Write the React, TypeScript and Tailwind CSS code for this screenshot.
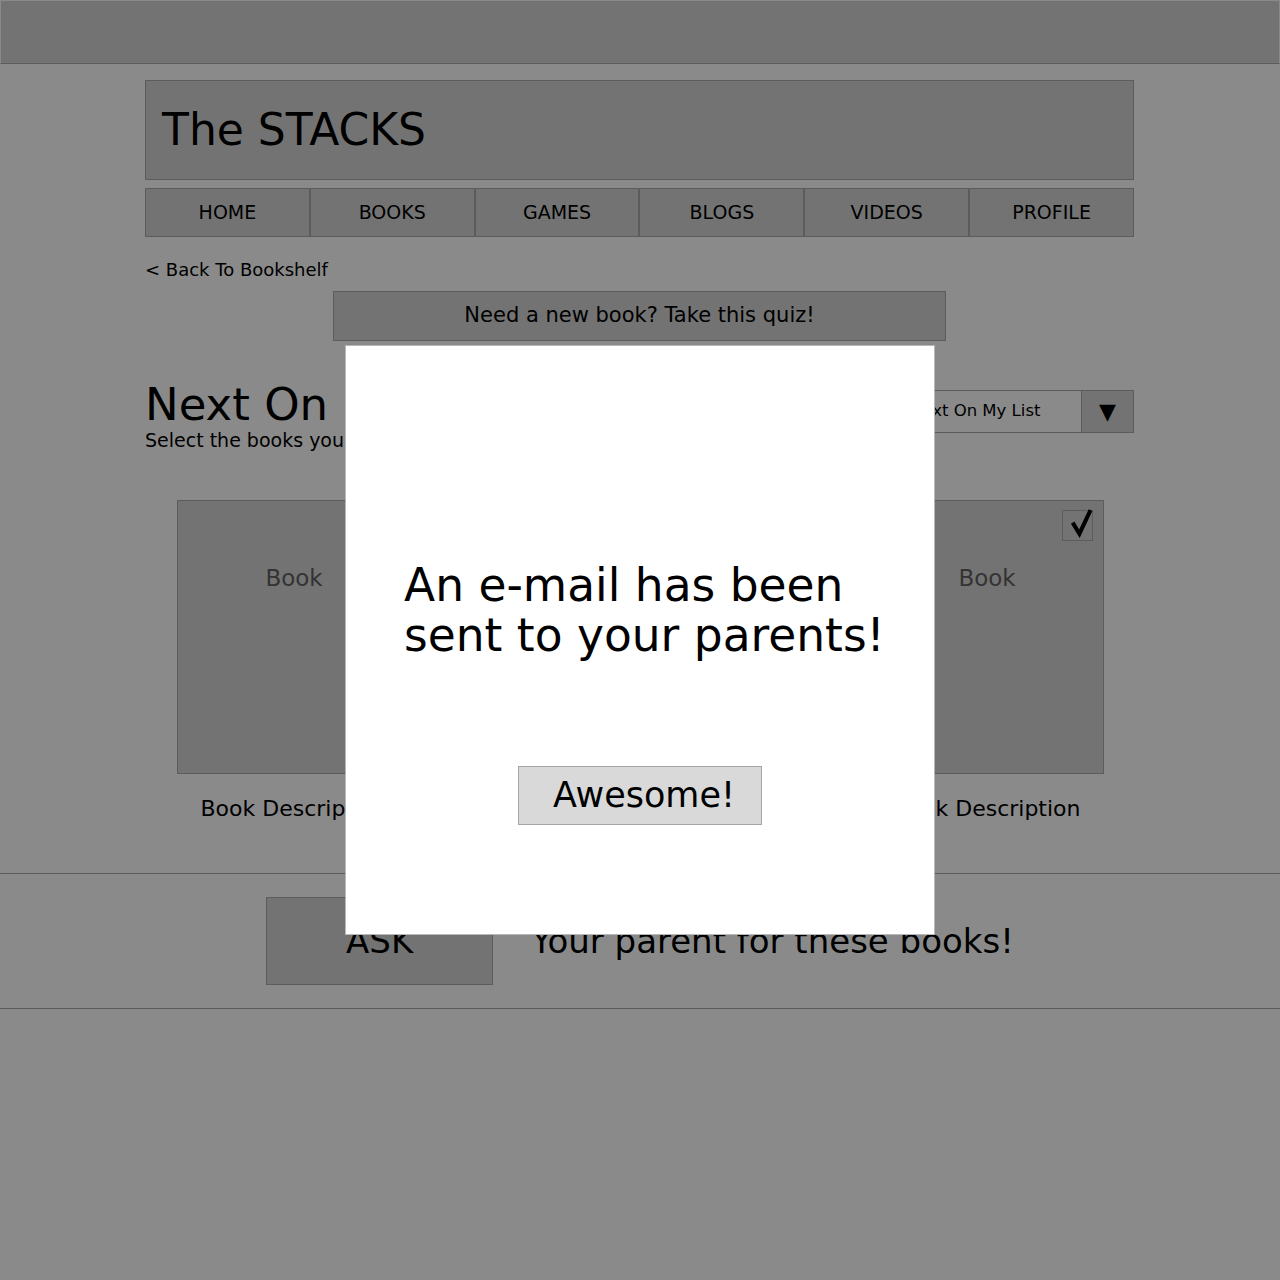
import React from "react";

const NAV = ["HOME", "BOOKS", "GAMES", "BLOGS", "VIDEOS", "PROFILE"];

function Check() {
  return (
    <svg viewBox="0 0 30 30" className="h-full w-full overflow-visible">
      <path d="M10 12 L17 23.5 L28.5 -1" fill="none" stroke="#000" strokeWidth="4.2" strokeLinejoin="miter" strokeLinecap="butt" />
    </svg>
  );
}

function BookCard({ checked }: { checked?: boolean }) {
  return (
    <div className="flex w-[234px] flex-col items-center">
      <div className="relative h-[274px] w-[234px] border border-[#aaaaaa] bg-[#d5d5d5]">
        <div className="pt-[64px] text-center text-[23px] leading-[26px] text-[#5f5f5f]">Book</div>
        {checked && (
          <div className="absolute right-[10px] top-[9px] h-[31px] w-[31px] border border-[#aaaaaa] bg-[#d5d5d5]">
            <Check />
          </div>
        )}
      </div>
      <div className="mt-[22px] text-[22px] leading-[26px]">Book Description</div>
    </div>
  );
}

export default function App() {
  return (
    <div className="relative h-[1280px] w-[1280px] overflow-hidden bg-white font-['DejaVu_Sans',sans-serif] text-black">
      {/* top bar */}
      <div className="h-[64px] border-x border-t border-b border-x-white border-t-white border-b-[#aaaaaa] bg-[#d5d5d5]" />

      <div className="ml-[145px] w-[989px]">
        <header className="mt-[16px] flex h-[100px] items-center border border-[#aaaaaa] bg-[#d5d5d5] pl-[16px]">
          <h1 className="text-[44px] leading-none">The STACKS</h1>
        </header>

        <nav className="mt-[8px] grid h-[49px] grid-cols-6">
          {NAV.map((n) => (
            <div key={n} className="flex items-center justify-center border border-[#aaaaaa] bg-[#d5d5d5] text-[19px] leading-none">
              {n}
            </div>
          ))}
        </nav>

        <div className="mt-[22px] text-[18px] leading-[22px]">&lt; Back To Bookshelf</div>

        <div className="mx-auto mt-[10px] flex h-[50px] w-[613px] items-center justify-center border border-[#aaaaaa] bg-[#d5d5d5] text-[21px]">
          Need a new book? Take this quiz!
        </div>

        <div className="mt-[41px] flex items-start justify-between">
          <div>
            <h2 className="text-[45px] leading-none">Next On My List</h2>
            <p className="mt-[2px] text-[19px] leading-[22px]">Select the books you want to read!</p>
          </div>
          <div className="mt-[8px] flex h-[43px] w-[236px] border border-[#aaaaaa] bg-white">
            <div className="flex flex-1 items-center pl-[11px] text-[16.5px]">Next On My List</div>
            <div className="flex w-[52px] items-center justify-center border-l border-[#aaaaaa] bg-[#d5d5d5] text-[22px]">▼</div>
          </div>
        </div>

        <div className="mt-[49px] flex justify-between pl-[32px] pr-[30px]">
          <BookCard />
          <BookCard />
          <BookCard checked />
        </div>
      </div>

      <section className="mt-[51px] flex items-center justify-center gap-[38px] border-y border-[#aaaaaa] py-[23px]">
        <div className="flex h-[88px] w-[227px] items-center justify-center border border-[#aaaaaa] bg-[#d5d5d5] text-[34px]">ASK</div>
        <div className="text-[34px]">Your parent for these books!</div>
      </section>

      {/* dim overlay */}
      <div className="absolute inset-0 bg-black/46" />

      {/* modal */}
      <div className="absolute left-[345px] top-[345px] h-[590px] w-[590px] border border-[#b8b8b8] bg-white">
        <p className="pl-[58px] pt-[215px] text-[45.5px] leading-[50px]">
          An e-mail has been
          <br />
          sent to your parents!
        </p>
        <div className="mt-[105px] flex justify-center">
          <button className="h-[59px] w-[244px] border border-[#a6a6a6] bg-[#d9d9d9] pl-[8px] text-[35px] leading-none">Awesome!</button>
        </div>
      </div>
    </div>
  );
}
